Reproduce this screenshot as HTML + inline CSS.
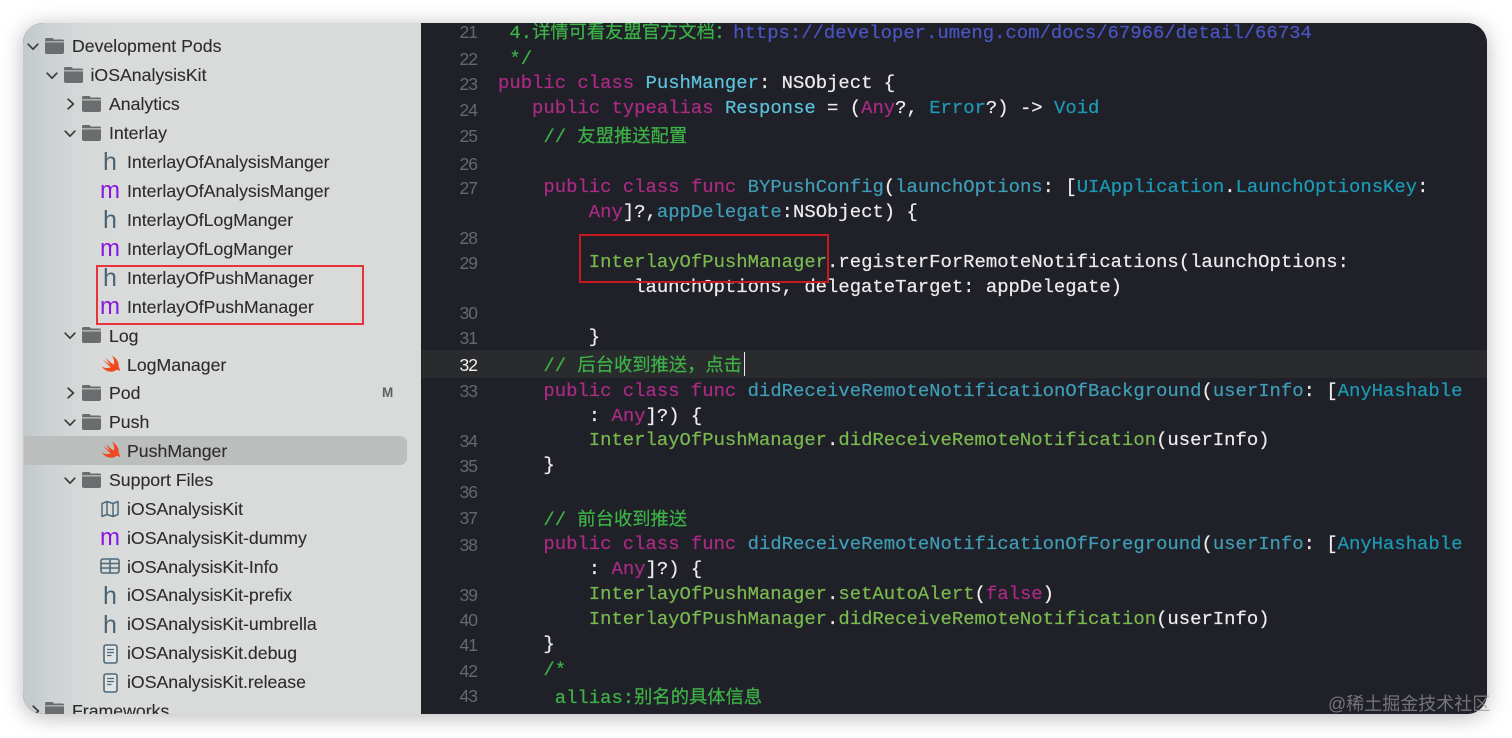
<!DOCTYPE html>
<html><head><meta charset="utf-8">
<style>
html,body{margin:0;padding:0;background:#fff;width:1512px;height:738px;overflow:hidden}
#win{position:absolute;left:23px;top:23px;width:1464px;height:691px;border-radius:20px;overflow:hidden;box-shadow:0 3px 22px rgba(0,0,0,.28);background:#1f2028}
#in{position:absolute;left:-23px;top:-23px;width:1512px;height:738px}
#side{position:absolute;left:23px;top:23px;width:398px;height:691px;background:linear-gradient(90deg,#c3c9cb 0,#cbd0d2 22px,#d5d8d8 55px,#d9dbda 90px)}
#ed{position:absolute;left:421px;top:23px;width:1066px;height:691px;background:#1f2028}
#cur{position:absolute;left:422px;top:350px;width:1065px;height:28px;background:#2a2b2c}
.r{position:absolute;font:17.7px/24px "Liberation Sans",sans-serif;color:#2c2c2c;white-space:pre;-webkit-text-stroke:.12px #2c2c2c}
.l{position:absolute;left:498px;font:18.92px/24px "Liberation Mono","Noto Sans CJK SC",monospace;color:#ececec;white-space:pre;-webkit-text-stroke:.22px}
.n{position:absolute;left:440px;width:37px;text-align:right;font:17.5px/24px "Liberation Sans",sans-serif;letter-spacing:-1px;color:#66686d}
.k{color:#ab2a84}.t{color:#5cc3dc}.p{color:#3f9db6}.u{color:#1c9ab5}.g{color:#7ab94f}.c{color:#3db247}.a{color:#4a55c2}
.z{font-family:"Noto Sans CJK SC",sans-serif;font-size:18.3px}
svg{position:absolute;overflow:visible}
.h,.m{position:absolute;font:25px/28px "Liberation Sans",sans-serif;width:24px;text-align:center}
.h{color:#4a6475;left:98px}.m{color:#8a14e0;left:98px;font-size:24px;margin-top:2px}
</style></head><body>
<svg width="0" height="0" style="position:absolute"><defs>
<symbol id="f" viewBox="0 0 19 16"><path d="M1.5 0H7.5L9 1.5H17.5A1.5 1.5 0 0 1 19 3V3.4H0V1.5A1.5 1.5 0 0 1 1.5 0Z" fill="#6a6c6d"/><path d="M0 4.4H19V14A2 2 0 0 1 17 16H2A2 2 0 0 1 0 14Z" fill="#6a6c6d"/></symbol>
<symbol id="d" viewBox="0 0 12 8"><path d="M1.2 1.2L6 6.2L10.8 1.2" fill="none" stroke="#3a3a3a" stroke-width="1.7" stroke-linecap="round" stroke-linejoin="round"/></symbol>
<symbol id="e" viewBox="0 0 8 12"><path d="M1.2 1.2L6.4 6L1.2 10.8" fill="none" stroke="#3a3a3a" stroke-width="1.7" stroke-linecap="round" stroke-linejoin="round"/></symbol>
<symbol id="s" viewBox="0.5 1 18.5 17"><path d="M0.8 11.5C4 14 7.5 14 10 12.6C7.5 10.8 4.5 8 2.6 5.2C5.2 7.4 7.6 9.2 9.6 10.4C8 8.4 6.2 5.6 5.2 3.4C7.8 6.2 10.8 8.8 13 10C13.9 7.5 13 4 11.3 1.3C15.8 3.8 18.4 8.5 17.6 12C18.6 13.5 19.1 15 18.6 16.6C17.6 15.2 16 14.8 14.6 15.8C11.2 18 5 17.6 0.8 11.5Z" fill="#f0491f"/></symbol>
<symbol id="b" viewBox="0 0 15 20"><rect x="1" y="1" width="13" height="18" rx="2" fill="#e2e4e4" stroke="#4e6a7a" stroke-width="1.6"/><path d="M4 5.5H11M4 8.5H11M4 11.5H8.5" stroke="#4e6a7a" stroke-width="1.2"/></symbol>
</defs></svg>
<div id="win"><div id="in">
<div id="side"></div>
<div id="ed"></div>
<div id="cur"></div>
<div style="position:absolute;left:24px;top:436px;width:383px;height:29px;background:#bcbdbd;border-radius:0 7px 7px 0"></div>

<svg style="left:27px;top:43px" width="12" height="8"><use href="#d"/></svg><svg style="left:45px;top:38px" width="19" height="16"><use href="#f"/></svg>
<div class="r" style="left:72px;top:34px">Development Pods</div>
<svg style="left:46px;top:72px" width="12" height="8"><use href="#d"/></svg><svg style="left:63.5px;top:67px" width="19" height="16"><use href="#f"/></svg>
<div class="r" style="left:90.5px;top:63px">iOSAnalysisKit</div>
<svg style="left:67px;top:98px" width="8" height="12"><use href="#e"/></svg><svg style="left:82px;top:96px" width="19" height="16"><use href="#f"/></svg>
<div class="r" style="left:109px;top:92px">Analytics</div>
<svg style="left:64px;top:130px" width="12" height="8"><use href="#d"/></svg><svg style="left:82px;top:125px" width="19" height="16"><use href="#f"/></svg>
<div class="r" style="left:109px;top:121px">Interlay</div>
<div class="h" style="top:148px">h</div><div class="r" style="left:127px;top:150px">InterlayOfAnalysisManger</div>
<div class="m" style="top:175px">m</div><div class="r" style="left:127px;top:179px">InterlayOfAnalysisManger</div>
<div class="h" style="top:206px">h</div><div class="r" style="left:127px;top:208px">InterlayOfLogManger</div>
<div class="m" style="top:233px">m</div><div class="r" style="left:127px;top:237px">InterlayOfLogManger</div>
<div class="h" style="top:264px">h</div><div class="r" style="left:127px;top:266px">InterlayOfPushManager</div>
<div class="m" style="top:291px">m</div><div class="r" style="left:127px;top:295px">InterlayOfPushManager</div>
<svg style="left:64px;top:332px" width="12" height="8"><use href="#d"/></svg><svg style="left:82px;top:327px" width="19" height="16"><use href="#f"/></svg>
<div class="r" style="left:109px;top:324px">Log</div>
<svg style="left:101px;top:355px" width="19" height="18"><use href="#s"/></svg><div class="r" style="left:127px;top:353px">LogManager</div>
<svg style="left:67px;top:387px" width="8" height="12"><use href="#e"/></svg><svg style="left:82px;top:385px" width="19" height="16"><use href="#f"/></svg>
<div class="r" style="left:109px;top:381px">Pod</div>
<div class="r" style="left:382px;top:381px;font-size:13.5px;font-weight:bold;color:#5d5f60;-webkit-text-stroke:0">M</div>
<svg style="left:64px;top:419px" width="12" height="8"><use href="#d"/></svg><svg style="left:82px;top:414px" width="19" height="16"><use href="#f"/></svg>
<div class="r" style="left:109px;top:410px">Push</div>
<svg style="left:101px;top:441px" width="19" height="18"><use href="#s"/></svg><div class="r" style="left:127px;top:439px">PushManger</div>
<svg style="left:64px;top:477px" width="12" height="8"><use href="#d"/></svg><svg style="left:82px;top:472px" width="19" height="16"><use href="#f"/></svg>
<div class="r" style="left:109px;top:468px">Support Files</div>
<svg style="left:101px;top:500px" width="18" height="18" viewBox="0 0 18 18"><path d="M1 3.5L6 1.5L12 3.5L17 1.5V14.5L12 16.5L6 14.5L1 16.5ZM6 1.5V14.5M12 3.5V16.5" fill="none" stroke="#4e6a7a" stroke-width="1.5" stroke-linejoin="round"/></svg>
<div class="r" style="left:127px;top:497px">iOSAnalysisKit</div>
<div class="m" style="top:522px">m</div><div class="r" style="left:127px;top:526px">iOSAnalysisKit-dummy</div>
<svg style="left:100px;top:558px" width="20" height="16" viewBox="0 0 20 16"><rect x="1" y="1" width="18" height="14" rx="2" fill="none" stroke="#4e6a7a" stroke-width="1.6"/><path d="M1 5.5H19M1 10H19M10 1V15" stroke="#4e6a7a" stroke-width="1.6"/></svg>
<div class="r" style="left:127px;top:555px">iOSAnalysisKit-Info</div>
<div class="h" style="top:582px">h</div><div class="r" style="left:127px;top:583px">iOSAnalysisKit-prefix</div>
<div class="h" style="top:611px">h</div><div class="r" style="left:127px;top:612px">iOSAnalysisKit-umbrella</div>
<svg style="left:103px;top:644px" width="15" height="20"><use href="#b"/></svg><div class="r" style="left:127px;top:641px">iOSAnalysisKit.debug</div>
<svg style="left:103px;top:673px" width="15" height="20"><use href="#b"/></svg><div class="r" style="left:127px;top:670px">iOSAnalysisKit.release</div>
<svg style="left:32px;top:705px" width="8" height="12"><use href="#e"/></svg><svg style="left:45px;top:702px" width="19" height="16"><use href="#f"/></svg>
<div class="r" style="left:72px;top:699px">Frameworks</div>

<div style="position:absolute;left:96px;top:265px;width:264px;height:56px;border:2px solid #e8333a"></div>

<div class="n" style="top:20px">21</div><div class="n" style="top:47px">22</div><div class="n" style="top:72px">23</div><div class="n" style="top:98px">24</div><div class="n" style="top:124px">25</div><div class="n" style="top:152px">26</div><div class="n" style="top:176px">27</div><div class="n" style="top:226px">28</div><div class="n" style="top:251px">29</div><div class="n" style="top:301px">30</div><div class="n" style="top:326px">31</div><div class="n" style="top:353px;color:#f2f2f2">32</div><div class="n" style="top:379px">33</div><div class="n" style="top:429px">34</div><div class="n" style="top:454px">35</div><div class="n" style="top:480px">36</div><div class="n" style="top:506px">37</div><div class="n" style="top:533px">38</div><div class="n" style="top:583px">39</div><div class="n" style="top:608px">40</div><div class="n" style="top:633px">41</div><div class="n" style="top:659px">42</div><div class="n" style="top:684px">43</div>

<div class="l" style="top:19px"> <span class="c">4.<span class="z">详情可看友盟官方文档：</span></span><span class="a">https://developer.umeng.com/docs/67966/detail/66734</span></div>
<div class="l c" style="top:47px"> */</div>
<div class="l" style="top:71px"><span class="k">public class</span> <span class="t">PushManger</span>: NSObject {</div>
<div class="l" style="top:96px">   <span class="k">public typealias</span> <span class="t">Response</span> = (<span class="k">Any</span>?, <span class="u">Error</span>?) -&gt; <span class="u">Void</span></div>
<div class="l c" style="top:123px">    // <span class="z">友盟推送配置</span></div>
<div class="l" style="top:175px">    <span class="k">public class func</span> <span class="p">BYPushConfig</span>(<span class="p">launchOptions</span>: [<span class="u">UIApplication</span>.<span class="u">LaunchOptionsKey</span>:</div>
<div class="l" style="top:200px">        <span class="k">Any</span>]?,<span class="p">appDelegate</span>:NSObject) {</div>
<div class="l" style="top:250px">        <span class="g">InterlayOfPushManager</span>.registerForRemoteNotifications(launchOptions:</div>
<div class="l" style="top:275px">            launchOptions, delegateTarget: appDelegate)</div>
<div class="l" style="top:325px">        }</div>
<div class="l c" style="top:352px">    // <span class="z">后台收到推送，点击</span></div>
<div style="position:absolute;left:744px;top:352px;width:1px;height:24px;background:#eee"></div>
<div class="l" style="top:379px">    <span class="k">public class func</span> <span class="p">didReceiveRemoteNotificationOfBackground</span>(<span class="p">userInfo</span>: [<span class="u">AnyHashable</span></div>
<div class="l" style="top:404px">        : <span class="k">Any</span>]?) {</div>
<div class="l" style="top:428px">        <span class="g">InterlayOfPushManager</span>.<span class="g">didReceiveRemoteNotification</span>(userInfo)</div>
<div class="l" style="top:453px">    }</div>
<div class="l c" style="top:506px">    // <span class="z">前台收到推送</span></div>
<div class="l" style="top:532px">    <span class="k">public class func</span> <span class="p">didReceiveRemoteNotificationOfForeground</span>(<span class="p">userInfo</span>: [<span class="u">AnyHashable</span></div>
<div class="l" style="top:557px">        : <span class="k">Any</span>]?) {</div>
<div class="l" style="top:582px">        <span class="g">InterlayOfPushManager</span>.<span class="g">setAutoAlert</span>(<span class="k">false</span>)</div>
<div class="l" style="top:607px">        <span class="g">InterlayOfPushManager</span>.<span class="g">didReceiveRemoteNotification</span>(userInfo)</div>
<div class="l" style="top:632px">    }</div>
<div class="l c" style="top:658px">    /*</div>
<div class="l c" style="top:684px">     allias:<span class="z">别名的具体信息</span></div>

<div style="position:absolute;left:579px;top:234px;width:246px;height:45px;border:2px solid #c51a20"></div>
</div></div>
<div style="position:absolute;left:1328px;top:692px;font:18px/24px 'Liberation Sans','Noto Sans CJK SC',sans-serif;color:rgba(150,150,150,.72);white-space:pre">@稀土掘金技术社区</div>
</body></html>
